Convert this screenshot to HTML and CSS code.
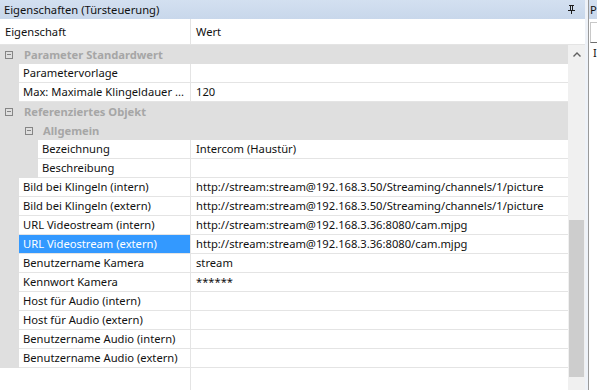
FILE: index.html
```html
<!DOCTYPE html>
<html lang="de">
<head>
    <meta charset="UTF-8">
    <title>Eigenschaften (Türsteuerung)</title>
    <link rel="stylesheet" href="styles.css">
</head>
<body>
    <div class="window">
        <!-- Eigenschaften-Fenster -->
        <div class="panel">
            <div class="titlebar">
                <span class="title">Eigenschaften (Türsteuerung)</span>
                <svg class="pin" width="9" height="9" viewBox="0 0 9 9">
                    <path d="M2 0h5v1H6v4h2v1H5v3H4V6H1V5h2V1H2z" fill="#1e1e1e"/>
                    <rect x="4" y="1" width="1" height="4" fill="#cfdcee"/>
                </svg>
            </div>
            <div class="header">
                <div class="hname">Eigenschaft</div>
                <div class="hvalue">Wert</div>
            </div>
            <div class="body">
                <div class="grid">
                    <div class="row group">
                        <span class="expander"></span>
                        <span class="gtext">Parameter Standardwert</span>
                    </div>
                    <div class="row">
                        <div class="gutter"></div>
                        <div class="name">Parametervorlage</div>
                        <div class="value"></div>
                    </div>
                    <div class="row">
                        <div class="gutter"></div>
                        <div class="name">Max: Maximale Klingeldauer ...</div>
                        <div class="value">120</div>
                    </div>
                    <div class="row group">
                        <span class="expander"></span>
                        <span class="gtext">Referenziertes Objekt</span>
                    </div>
                    <div class="row group sub">
                        <span class="expander"></span>
                        <span class="gtext">Allgemein</span>
                    </div>
                    <div class="row deep">
                        <div class="gutter"></div>
                        <div class="name">Bezeichnung</div>
                        <div class="value">Intercom (Haustür)</div>
                    </div>
                    <div class="row deep">
                        <div class="gutter"></div>
                        <div class="name">Beschreibung</div>
                        <div class="value"></div>
                    </div>
                    <div class="row">
                        <div class="gutter"></div>
                        <div class="name">Bild bei Klingeln (intern)</div>
                        <div class="value">http://stream:stream@192.168.3.50/Streaming/channels/1/picture</div>
                    </div>
                    <div class="row">
                        <div class="gutter"></div>
                        <div class="name">Bild bei Klingeln (extern)</div>
                        <div class="value">http://stream:stream@192.168.3.50/Streaming/channels/1/picture</div>
                    </div>
                    <div class="row">
                        <div class="gutter"></div>
                        <div class="name">URL Videostream (intern)</div>
                        <div class="value">http://stream:stream@192.168.3.36:8080/cam.mjpg</div>
                    </div>
                    <div class="row selected">
                        <div class="gutter"></div>
                        <div class="name">URL Videostream (extern)</div>
                        <div class="value">http://stream:stream@192.168.3.36:8080/cam.mjpg</div>
                    </div>
                    <div class="row">
                        <div class="gutter"></div>
                        <div class="name">Benutzername Kamera</div>
                        <div class="value">stream</div>
                    </div>
                    <div class="row">
                        <div class="gutter"></div>
                        <div class="name">Kennwort Kamera</div>
                        <div class="value">******</div>
                    </div>
                    <div class="row">
                        <div class="gutter"></div>
                        <div class="name">Host für Audio (intern)</div>
                        <div class="value"></div>
                    </div>
                    <div class="row">
                        <div class="gutter"></div>
                        <div class="name">Host für Audio (extern)</div>
                        <div class="value"></div>
                    </div>
                    <div class="row">
                        <div class="gutter"></div>
                        <div class="name">Benutzername Audio (intern)</div>
                        <div class="value"></div>
                    </div>
                    <div class="row">
                        <div class="gutter"></div>
                        <div class="name">Benutzername Audio (extern)</div>
                        <div class="value"></div>
                    </div>
                    <div class="filler">
                        <div class="fname"></div>
                        <div class="fvalue"></div>
                    </div>
                </div>
                <div class="scrollbar">
                    <div class="arrow">
                        <svg width="8" height="5" viewBox="0 0 8 5">
                            <path d="M0.5 4.5L4 1L7.5 4.5" fill="none" stroke="#606060" stroke-width="1.4"/>
                        </svg>
                    </div>
                    <div class="track">
                        <div class="thumb"></div>
                    </div>
                </div>
            </div>
        </div>

        <div class="gap"></div>

        <!-- zweites Fenster, abgeschnitten -->
        <div class="side">
            <div class="side-title">P</div>
            <div class="side-body">
                <div class="side-box"></div>
                <div class="side-text">I</div>
            </div>
        </div>
    </div>
</body>
</html>
```

FILE: styles.css
```css
* {
    box-sizing: border-box;
}

body {
    margin: 0;
    padding: 0;
    font-family: "Noto Sans", "Open Sans", sans-serif;
    font-size: 11.2px;
    color: #111111;
    background-color: #ffffff;
}

.window {
    display: flex;
    width: 597px;
    height: 390px;
    overflow: hidden;
}

.panel {
    width: 585px;
    display: flex;
    flex-direction: column;
    flex-shrink: 0;
}

.titlebar {
    height: 19px;
    background: linear-gradient(#d3e0f0, #c8d7eb);
    display: flex;
    align-items: center;
    justify-content: space-between;
    padding: 0 9px 0 4px;
}

.title {
    line-height: 19px;
}

.pin {
    display: block;
}

.header {
    height: 26px;
    display: flex;
    border-bottom: 1px solid #e4e4e4;
    line-height: 25px;
}

.hname {
    width: 191px;
    padding-left: 5px;
    border-right: 1px solid #e4e4e4;
}

.hvalue {
    padding-left: 5px;
}

.body {
    flex: 1;
    display: flex;
    min-height: 0;
}

.grid {
    flex: 1;
    display: flex;
    flex-direction: column;
}

.row {
    height: 19px;
    display: flex;
    flex-shrink: 0;
}

.gutter {
    width: 19px;
    background-color: #dfdfdf;
    flex-shrink: 0;
}

.row.deep .gutter {
    width: 38px;
}

.name {
    width: 172px;
    flex-shrink: 0;
    padding-left: 4px;
    line-height: 18px;
    border-bottom: 1px solid #e4e4e4;
    border-right: 1px solid #e4e4e4;
    white-space: nowrap;
    overflow: hidden;
}

.row.deep .name {
    width: 153px;
}

.value {
    flex: 1;
    padding-left: 5px;
    line-height: 18px;
    border-bottom: 1px solid #e4e4e4;
    white-space: nowrap;
    overflow: hidden;
}

.row.selected .name {
    background-color: #3399ff;
    color: #ffffff;
}

.row.group {
    background-color: #dfdfdf;
    align-items: center;
    padding-left: 5px;
}

.row.group.sub {
    padding-left: 25px;
}

.expander {
    width: 8px;
    height: 8px;
    border: 1px solid #858585;
    position: relative;
    flex-shrink: 0;
}

.expander::after {
    content: "";
    position: absolute;
    left: 1px;
    top: 2px;
    width: 4px;
    height: 1px;
    background-color: #858585;
}

.gtext {
    font-weight: bold;
    color: #a6a6a6;
    margin-left: 11px;
}

.row.group.sub .gtext {
    margin-left: 10px;
}

.filler {
    flex: 1;
    display: flex;
}

.fname {
    width: 191px;
    border-right: 1px solid #e4e4e4;
}

.scrollbar {
    width: 17px;
    background-color: #f0f0f0;
    display: flex;
    flex-direction: column;
}

.arrow {
    height: 18px;
    display: flex;
    align-items: center;
    justify-content: center;
}

.track {
    flex: 1;
    padding: 157px 1px 0 1px;
}

.thumb {
    height: 157px;
    background-color: #cdcdcd;
}

.gap {
    width: 3px;
    background-color: #eef2f8;
    flex-shrink: 0;
}

.side {
    flex: 1;
    display: flex;
    flex-direction: column;
    border-left: 1px solid #9a9a9a;
}

.side-title {
    height: 19px;
    line-height: 19px;
    background: linear-gradient(#d3e0f0, #c8d7eb);
    padding-left: 1px;
}

.side-body {
    flex: 1;
    padding: 3px 0 0 1px;
}

.side-box {
    height: 21px;
    border-top: 1px solid #c8c8c8;
    border-left: 1px solid #c8c8c8;
    border-bottom: 1px solid #6e6e6e;
}

.side-text {
    padding-left: 3px;
    line-height: 20px;
}
```
